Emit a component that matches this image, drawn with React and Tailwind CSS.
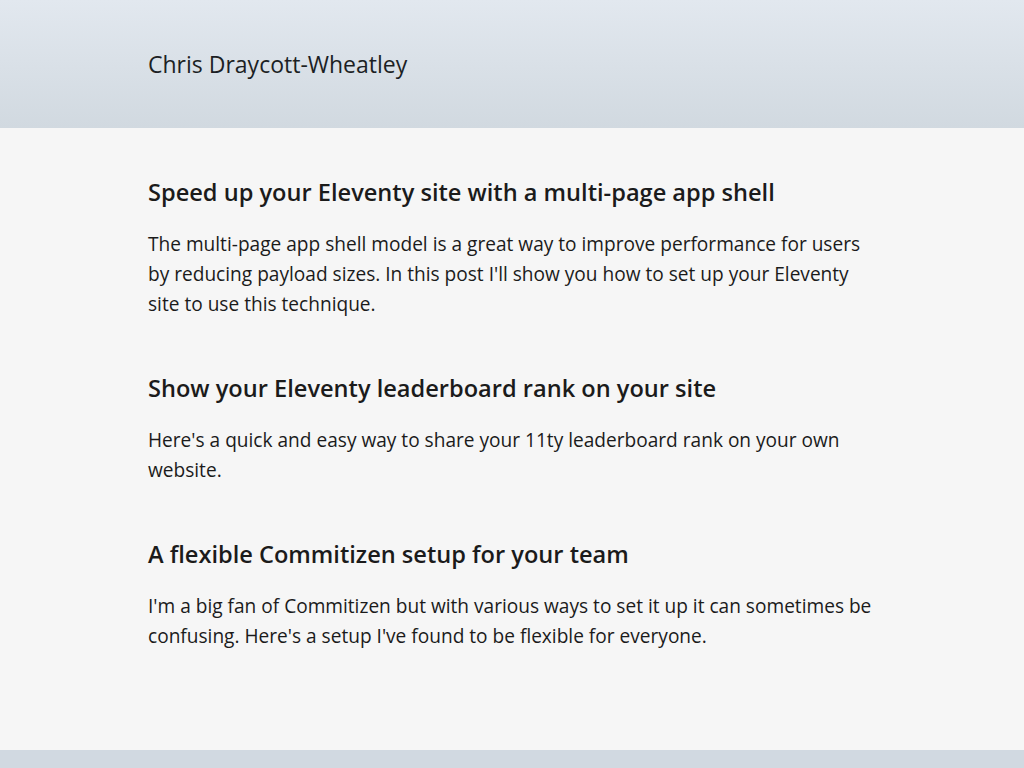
const posts = [
  {
    title: 'Speed up your Eleventy site with a multi-page app shell',
    excerpt:
      "The multi-page app shell model is a great way to improve performance for users by reducing payload sizes. In this post I'll show you how to set up your Eleventy site to use this technique.",
  },
  {
    title: 'Show your Eleventy leaderboard rank on your site',
    excerpt: "Here's a quick and easy way to share your 11ty leaderboard rank on your own website.",
  },
  {
    title: 'A flexible Commitizen setup for your team',
    excerpt:
      "I'm a big fan of Commitizen but with various ways to set it up it can sometimes be confusing. Here's a setup I've found to be flexible for everyone.",
  },
];

function PostSummary({ title, excerpt }) {
  return (
    <article>
      <h2 className="text-[23.6px] font-semibold leading-[30px] text-[#1b1b1b]">{title}</h2>
      <p className="mt-[22px] text-[19.1px] leading-[30px] text-[#1b1b1b]">{excerpt}</p>
    </article>
  );
}

export default function App() {
  return (
    <div className="min-h-screen bg-[#f6f6f6] font-['Open_Sans',sans-serif]">
      <header className="flex h-[128px] items-center bg-gradient-to-b from-[#e2e8ef] to-[#d1d9e0] px-[148px]">
        <span className="text-[23px] text-[#1c1f24]">Chris Draycott-Wheatley</span>
      </header>
      <main className="px-[148px] pb-[99px] pt-[49px]">
        <div className="flex max-w-[728px] flex-col gap-[54px]">
          {posts.map((p) => (
            <PostSummary key={p.title} {...p} />
          ))}
        </div>
      </main>
      <footer className="h-[18px] bg-[#d1d9e1]" />
    </div>
  );
}
